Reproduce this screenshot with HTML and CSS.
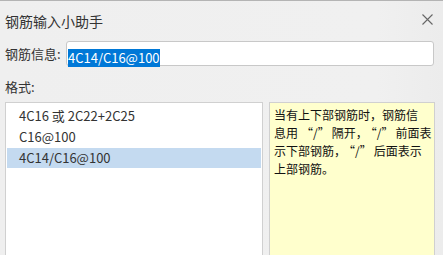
FILE: index.html
```html
<!DOCTYPE html>
<html lang="zh-CN">
<head>
<meta charset="utf-8">
<title>钢筋输入小助手</title>
<link rel="stylesheet" href="styles.css">
</head>
<body>
<div class="dialog">
  <div class="title-bar">
    <span class="title">钢筋输入小助手</span>
    <svg class="close" width="11" height="11" viewBox="0 0 11 11"><path d="M0.5 0.5 L10.5 10.5 M10.5 0.5 L0.5 10.5" stroke="#666" stroke-width="1.1" fill="none"/></svg>
  </div>
  <div class="info-row">
    <span class="label">钢筋信息:</span>
    <div class="field"><span class="sel">4C14/C16@100</span></div>
  </div>
  <div class="format-label">格式:</div>
  <div class="panels">
    <ul class="list">
      <li class="item">4C16 或 2C22+2C25</li>
      <li class="item">C16@100</li>
      <li class="item active">4C14/C16@100</li>
    </ul>
    <div class="hint">当有上下部钢筋时，钢筋信<br>息用<span class="qo">“</span>/<span class="qc">”</span>隔开，<span class="qo">“</span>/<span class="qc">”</span>前面表<br>示下部钢筋，<span class="qo">“</span>/<span class="qc">”</span>后面表示<br>上部钢筋。</div>
  </div>
</div>
</body>
</html>
```
FILE: styles.css
```css
html, body {
  margin: 0;
  padding: 0;
}
body {
  background: #f0f0f0;
  font-family: "Noto Sans CJK SC", "Noto Sans", sans-serif;
  color: #333;
  overflow: hidden;
}
.dialog {
  box-sizing: border-box;
  border-top: 1px solid #b4b4b4;
  height: 255px;
  overflow: hidden;
  background: linear-gradient(90deg, #efefef 0%, #f0f0f0 85%, #ececec 100%);
}
.title-bar {
  height: 39px;
  display: flex;
  align-items: center;
  justify-content: space-between;
  padding: 0 10px 0 5px;
}
.title {
  font-size: 14px;
  color: #333;
}
.close {
  display: block;
  margin-top: -2px;
}
.info-row {
  display: flex;
  align-items: center;
  padding-left: 5px;
  margin-top: 1px;
}
.label {
  width: 61px;
  font-size: 13px;
  color: #333;
}
.field {
  box-sizing: border-box;
  width: 368px;
  height: 25px;
  background: #fff;
  border: 1px solid #c8c8c8;
  border-radius: 3px;
  padding: 2px 0 0 1px;
}
.sel {
  display: inline-block;
  height: 18px;
  line-height: 18px;
  font-size: 13px;
  background: #0078d7;
  color: #fff;
}
.format-label {
  font-size: 13px;
  line-height: 18px;
  padding-left: 5px;
  margin-top: 12px;
  color: #333;
}
.panels {
  display: flex;
  gap: 6px;
  padding-left: 5px;
  margin-top: 6px;
}
.list {
  box-sizing: border-box;
  width: 258px;
  height: 170px;
  margin: 0;
  padding: 3px 1px;
  list-style: none;
  background: #fff;
  border: 1px solid #d0d0d0;
}
.item {
  height: 20px;
  line-height: 20px;
  margin-bottom: 1px;
  padding-left: 12px;
  font-size: 13px;
  color: #333;
}
.item.active {
  background: #c4daf0;
}
.hint {
  box-sizing: border-box;
  width: 166px;
  height: 170px;
  background: #ffffcd;
  border: 1px solid #d0d0d0;
  padding: 3px 2px 0 4px;
  font-size: 12px;
  line-height: 18px;
  color: #111;
  white-space: nowrap;
}
.qo {
  margin-left: 3px;
}
.qc {
  margin-right: 2px;
}
```
